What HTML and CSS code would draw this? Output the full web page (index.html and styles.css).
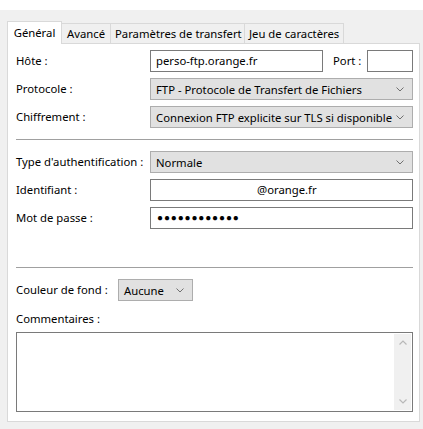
FILE: index.html
```html
<!DOCTYPE html>
<html lang="fr">
<head>
<meta charset="utf-8">
<title>Site</title>
<link rel="stylesheet" href="styles.css">
</head>
<body>
<div class="topband"></div>
<div class="dialog">
  <div class="tabs">
    <div class="tab active">Général</div>
    <div class="tab tab-adv">Avancé</div>
    <div class="tab tab-transfer">Paramètres de transfert</div>
    <div class="tab tab-charset">Jeu de caractères</div>
  </div>
  <div class="panel">
    <div class="group">
      <div class="row">
        <span class="label">Hôte :</span>
        <div class="hostline">
          <div class="input host">perso-ftp.orange.fr</div>
          <span class="label port-label">Port :</span>
          <div class="input port"></div>
        </div>
      </div>
      <div class="row">
        <span class="label">Protocole :</span>
        <div class="select">FTP - Protocole de Transfert de Fichiers<svg class="chev" viewBox="0 0 8 5" width="8" height="5"><polyline points="0.5,0.5 4,4 7.5,0.5"/></svg></div>
      </div>
      <div class="row">
        <span class="label">Chiffrement :</span>
        <div class="select">Connexion FTP explicite sur TLS si disponible<svg class="chev" viewBox="0 0 8 5" width="8" height="5"><polyline points="0.5,0.5 4,4 7.5,0.5"/></svg></div>
      </div>
    </div>
    <div class="sep sep1"></div>
    <div class="group">
      <div class="row">
        <span class="label">Type d'authentification :</span>
        <div class="select">Normale<svg class="chev" viewBox="0 0 8 5" width="8" height="5"><polyline points="0.5,0.5 4,4 7.5,0.5"/></svg></div>
      </div>
      <div class="row">
        <span class="label">Identifiant :</span>
        <div class="input ident">@orange.fr</div>
      </div>
      <div class="row">
        <span class="label">Mot de passe :</span>
        <div class="input pass"><span class="dots">●●●●●●●●●●●●</span></div>
      </div>
    </div>
    <div class="sep sep2"></div>
    <div class="colorrow">
      <span class="label">Couleur de fond :</span>
      <div class="select small">Aucune<svg class="chev" viewBox="0 0 8 5" width="8" height="5"><polyline points="0.5,0.5 4,4 7.5,0.5"/></svg></div>
    </div>
    <div class="label comments-label">Commentaires :</div>
    <div class="textarea">
      <div class="text"></div>
      <div class="vscroll">
        <svg viewBox="0 0 8 5" width="8" height="5"><polyline points="0.5,4.5 4,1 7.5,4.5"/></svg>
        <svg viewBox="0 0 8 5" width="8" height="5"><polyline points="0.5,0.5 4,4 7.5,0.5"/></svg>
      </div>
    </div>
  </div>
</div>
</body>
</html>
```
FILE: styles.css
```css
html, body {
  margin: 0;
  padding: 0;
}
body {
  background: #f0f0f0;
  font-family: "Noto Sans", "Open Sans", sans-serif;
  font-size: 11.3px;
  color: #000;
  width: 423px;
  height: 429px;
  overflow: hidden;
}
.topband {
  height: 10px;
  background: #fff;
}
.dialog {
  padding: 10px 3px 0 7px;
}
.tabs {
  display: flex;
  align-items: flex-end;
  height: 23px;
}
.tab {
  height: 20px;
  box-sizing: border-box;
  border: 1px solid #d9d9d9;
  border-bottom: none;
  border-left: none;
  background: #f0f0f0;
  padding: 0 4px;
  line-height: 19px;
  white-space: nowrap;
  text-align: center;
}
.tab-adv {
  width: 49px;
}
.tab-transfer {
  width: 134px;
}
.tab-charset {
  width: 99px;
}
.tab.active {
  position: relative;
  z-index: 1;
  width: 55px;
  height: 23px;
  margin-bottom: -1px;
  background: #fff;
  border-left: 1px solid #d9d9d9;
  padding: 0;
  line-height: 22px;
}
.panel {
  height: 379px;
  box-sizing: border-box;
  border: 1px solid #d9d9d9;
  background: #fff;
  padding: 6px 6px 7px 8px;
  display: flex;
  flex-direction: column;
}
.group {
  display: flex;
  flex-direction: column;
  gap: 6px;
}
.row {
  display: grid;
  grid-template-columns: 134px 263px;
  align-items: center;
  height: 22px;
}
.label {
  white-space: nowrap;
  position: relative;
  top: -1px;
}
.hostline {
  display: flex;
  align-items: center;
}
.input {
  height: 22px;
  box-sizing: border-box;
  border: 1px solid #7a7a7a;
  background: #fff;
  padding: 0 5px;
  line-height: 19px;
  white-space: nowrap;
  overflow: hidden;
}
.input.host {
  width: 173px;
}
.port-label {
  margin-left: 10px;
  width: 34px;
}
.input.port {
  width: 46px;
}
.input.ident {
  padding-left: 106px;
}
.input.pass {
  padding-left: 6px;
}
.dots {
  font-size: 10px;
  letter-spacing: 0.85px;
  line-height: 20px;
  position: relative;
  top: -1px;
}
.select {
  height: 22px;
  box-sizing: border-box;
  border: 1px solid #adadad;
  background: #e1e1e1;
  padding: 0 5px;
  line-height: 19px;
  display: flex;
  align-items: center;
  justify-content: space-between;
  white-space: nowrap;
}
.chev {
  fill: none;
  stroke: #707070;
  stroke-width: 1;
  margin-right: 3px;
}
.sep {
  height: 1px;
  background: #a0a0a0;
  width: 397px;
}
.sep1 {
  margin: 11px 0 11px 0;
}
.sep2 {
  margin: 38px 0 11px 0;
}
.colorrow {
  display: flex;
  align-items: center;
  height: 22px;
}
.colorrow .label {
  width: 102px;
}
.select.small {
  width: 75px;
}
.comments-label {
  margin-top: 11px;
  height: 16px;
  line-height: 16px;
}
.textarea {
  margin-top: 4px;
  width: 397px;
  height: 80px;
  box-sizing: border-box;
  border: 1px solid #7a7a7a;
  display: flex;
  justify-content: flex-end;
  padding: 1px;
}
.vscroll {
  width: 17px;
  background: #f0f0f0;
  display: flex;
  flex-direction: column;
  align-items: center;
  justify-content: space-between;
  padding: 6px 0;
}
.vscroll svg {
  fill: none;
  stroke: #b8b8b8;
  stroke-width: 1.2;
}
.text {
  flex: 1;
}
```
